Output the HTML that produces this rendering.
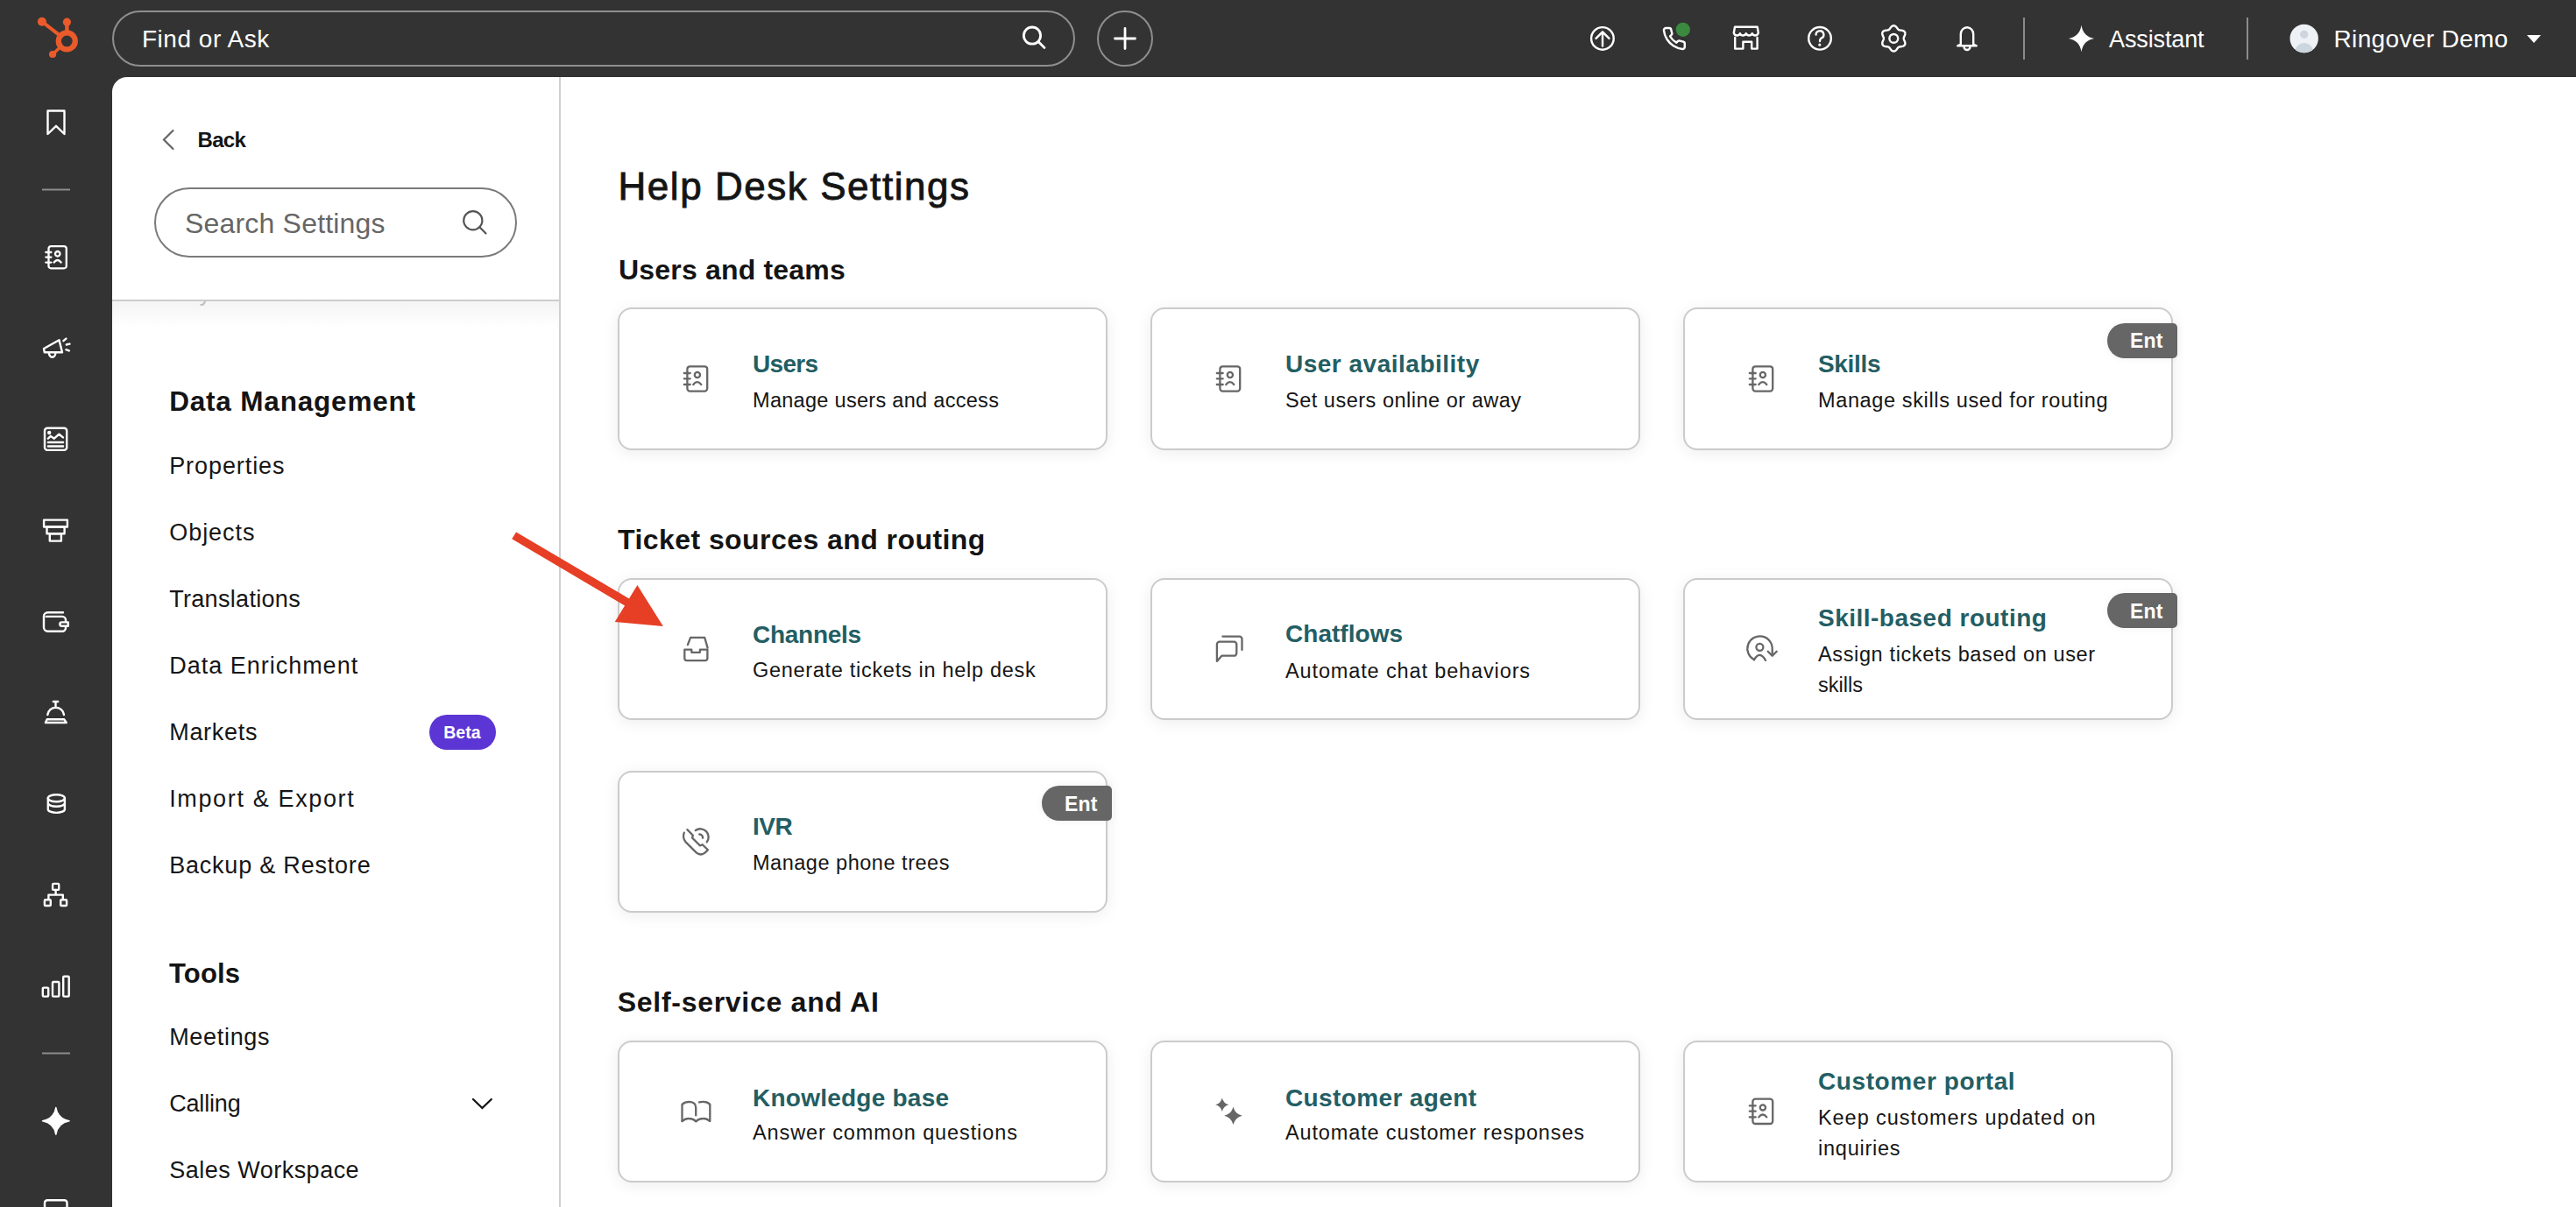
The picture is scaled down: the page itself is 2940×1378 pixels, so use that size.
<!DOCTYPE html>
<html><head><meta charset="utf-8"><title>Help Desk Settings</title>
<style>
html,body{margin:0;padding:0}
body{width:2940px;height:1378px;overflow:hidden;position:relative;background:#333333;font-family:"Liberation Sans",sans-serif}
.t{position:absolute;white-space:nowrap;line-height:1}
.panel{position:absolute;left:128px;top:88px;width:2812px;height:1290px;background:#ffffff;border-top-left-radius:17px;overflow:hidden}
.side{position:absolute;left:510px;top:0;width:2px;height:1290px;background:#cfcfcf}
.hline{position:absolute;left:0;top:254px;width:510px;height:2px;background:#cccccc}
.fade{position:absolute;left:0;top:256px;width:510px;height:30px;background:linear-gradient(rgba(0,0,0,0.045),rgba(0,0,0,0))}
.topsearch{position:absolute;left:128px;top:12px;width:1099px;height:64px;box-sizing:border-box;border:2px solid #8f8f8f;border-radius:32px}
.plus{position:absolute;left:1252px;top:12px;width:64px;height:64px;box-sizing:border-box;border:2px solid #8f8f8f;border-radius:50%}
.ssearch{position:absolute;left:176px;top:214px;width:414px;height:80px;box-sizing:border-box;border:2px solid #7a7a7a;border-radius:40px}
.beta{position:absolute;left:490px;top:816px;width:76px;height:40px;border-radius:20px;background:#5c35d5}
.card{position:absolute;width:559px;height:162.8px;box-sizing:border-box;border:2px solid #cbcbcb;border-radius:16px;background:#fff;box-shadow:0 3px 18px rgba(0,0,0,0.075)}
.ent{position:absolute;width:80px;height:40px;border-radius:20px 5px 5px 20px;background:#666666;box-shadow:0 0 10px rgba(0,0,0,0.06)}
svg.ov{position:absolute;left:0;top:0}
</style></head><body>
<div class="topsearch"></div>
<div class="plus"></div>
<div class="panel"><div class="side"></div><div class="hline"></div><div style="position:absolute;left:0;top:256px;width:510px;height:20px;overflow:hidden"><div class="t" style="left:65.2px;top:-23px;font-size:27px;color:#c8c8c8;letter-spacing:0.6px">Payments Account</div></div><div class="fade"></div></div>
<div class="ssearch"></div>
<div class="beta"></div>
<div class="card" style="left:704.5px;top:351.3px"></div>
<div class="card" style="left:1312.5px;top:351.3px"></div>
<div class="card" style="left:1920.5px;top:351.3px"></div>
<div class="ent" style="left:2405px;top:369.0px"></div>
<div class="card" style="left:704.5px;top:659.6px"></div>
<div class="card" style="left:1312.5px;top:659.6px"></div>
<div class="card" style="left:1920.5px;top:659.6px"></div>
<div class="ent" style="left:2405px;top:677.3000000000001px"></div>
<div class="card" style="left:704.5px;top:879.6px"></div>
<div class="ent" style="left:1189px;top:897.3000000000001px"></div>
<div class="card" style="left:704.5px;top:1187.7px"></div>
<div class="card" style="left:1312.5px;top:1187.7px"></div>
<div class="card" style="left:1920.5px;top:1187.7px"></div>
<svg class="ov" width="2940" height="1378" viewBox="0 0 2940 1378">
<g fill="#eb5a2b" stroke="#eb5a2b"><circle cx="76.3" cy="46.9" r="9.5" fill="none" stroke-width="6.3"/><path d="M76.4 25.2 V36" stroke-width="4.4" fill="none"/><path d="M47.9 24.7 L67.5 39.8" stroke-width="4" fill="none"/><path d="M60.1 62 L67.5 55" stroke-width="3.6" fill="none"/><circle cx="76.4" cy="25.2" r="4.6" stroke="none"/><circle cx="47.9" cy="24.7" r="5" stroke="none"/><circle cx="60.1" cy="62" r="4.1" stroke="none"/></g>
<g stroke="#fff" fill="none" stroke-width="2.4" stroke-linecap="round" stroke-linejoin="round">
<path d="M54.5 126.5 H73.5 V153 L64 143.8 L54.5 153 Z"/>
<g transform="translate(64.4 293.6) scale(0.89)" stroke-width="2.6"><rect x="-10" y="-14" width="22.8" height="28.3" rx="3"/><path d="M-13.6 -6.3 H-6.7 M-13.6 0 H-6.7 M-13.6 6.7 H-6.7"/><circle cx="1.5" cy="-4.3" r="3.1"/><path d="M-3.1 6.7 Q1.4 0.9 5.9 6.7"/></g>
<path d="M50 398 L67.5 388.2 L71 402.3 L50.8 402.3 Z"/><path d="M55.8 402.5 A3.8 5.2 0 0 0 63.4 402.5"/><path d="M72.4 389.2 L75.4 386.6 M75.8 393.5 L79.5 392.7 M75.4 399.2 L78.8 400.4"/>
<rect x="51" y="488.7" width="25.2" height="25.2" rx="3"/><circle cx="56.2" cy="494" r="1" fill="#fff"/><path d="M54.9 500.7 L57.9 497.9 L61.8 500.7 L67.4 495.7 L71.9 499.4 M54.9 505 H72.1 M54.9 509.5 H72.1"/>
<rect x="50.1" y="593.6" width="26.8" height="7.9"/><rect x="53.5" y="601.5" width="20.1" height="7.8"/><rect x="56.8" y="609.3" width="13.1" height="8.3"/>
<path d="M72 699.2 H54.5 A4.5 4.5 0 0 0 50 703.7 V716.2 A4.5 4.5 0 0 0 54.5 720.7 H71 A4 4 0 0 0 75 716.7 V715.2"/><path d="M52.7 703.9 H71 A4 4 0 0 1 75 707.9 V709.6"/><path d="M77.7 710.4 H70.5 A2.2 2.2 0 0 0 70.5 714.8 H77.7 Z"/>
<path d="M60.8 801 H66.2 M63.5 801.5 V806"/><path d="M54.3 816 A9.4 9.2 0 0 1 73 816"/><path d="M53.7 821.3 H73.3 L75.7 825 H51.9 Z"/>
<ellipse cx="64.35" cy="911.25" rx="9.55" ry="4"/><path d="M54.8 911.25 V923.9 A9.55 4 0 0 0 73.9 923.9 V911.25 M54.8 916.8 A9.55 4 0 0 0 73.9 916.8"/>
<rect x="60.1" y="1008.9" width="7.1" height="7" rx="1"/><path d="M63.6 1016 V1021.6 M55.4 1026.3 V1021.6 H71.8 V1026.3"/><rect x="50.9" y="1027.3" width="6.9" height="6.7" rx="1"/><rect x="69.2" y="1027.3" width="6.9" height="6.7" rx="1"/>
<rect x="48.8" y="1127.6" width="6.4" height="10" rx="1"/><rect x="60" y="1121" width="7.4" height="16.6" rx="1"/><rect x="72.2" y="1114.7" width="6.5" height="22.9" rx="1"/>
<rect x="51" y="1370.2" width="25.5" height="22" rx="3"/>
</g>
<rect x="48" y="215.5" width="32" height="2" fill="#8c8c8c"/>
<rect x="48" y="1201.5" width="32" height="2" fill="#8c8c8c"/>
<path d="M63.80 1264.60 Q66.08 1277.52 79.00 1279.80 Q66.08 1282.08 63.80 1295.00 Q61.52 1282.08 48.60 1279.80 Q61.52 1277.52 63.80 1264.60 Z" fill="#fff" stroke="#fff" stroke-width="1.6" stroke-linejoin="round"/>
<g stroke="#fff" fill="none" stroke-width="2.4" stroke-linecap="round" stroke-linejoin="round" stroke-width="2.5">
<circle cx="1178" cy="40.6" r="9.6" stroke-width="2.8"/><path d="M1185 47.6 L1192 54.6" stroke-width="2.8"/>
<path d="M1284 32.5 V55.5 M1272.5 44 H1295.5" stroke-width="2.8"/>
<circle cx="1828.9" cy="43.9" r="12.8"/><path d="M1829 52.6 V36.6 M1821.5 43.9 L1829 36.4 L1836.5 43.9"/>
<g transform="translate(1896.4 29.6) scale(1.2)" stroke-width="2.05"><path d="M22 16.92v3a2 2 0 0 1-2.18 2 19.79 19.79 0 0 1-8.63-3.070 19.5 19.5 0 0 1-6-6 19.79 19.790 0 0 1-3.07-8.67A2 2 0 0 1 4.11 2h3a2 2 0 0 1 2 1.72 12.84 12.84 0 0 0 .7 2.81 2 2 0 0 1-.45 2.11L8.09 9.91a16 16 0 0 0 6 6l1.27-1.27a2 2 0 0 1 2.11-.45 12.84 12.84 0 0 0 2.81.7A2 2 0 0 1 22 16.92z"/></g>
<path d="M1980 30.8 H2005.7 L2006.8 37.5 Q2006 40.5 2003.2 40.5 Q2000.5 40.5 1999.8 38.2 Q1999 40.5 1996.3 40.5 Q1993.5 40.5 1992.8 38.2 Q1992 40.5 1989.3 40.5 Q1986.6 40.5 1986 38.2 Q1985.2 40.5 1982.4 40.5 Q1979.6 40.5 1978.8 37.5 Z"/><path d="M1980.2 43 V55.6 H1989.4 V47.8 H1999.2 V55.6 H2005.6 V43"/>
<circle cx="2077" cy="43.8" r="12.8"/><path d="M2072.6 39.6 A4.4 4.3 0 1 1 2078.6 43.6 Q2077 44.5 2077 47"/>
<circle cx="2076.8" cy="51.2" r="0.6" fill="#fff" stroke-width="2"/>
<path d="M2172.70 43.90 L2172.76 44.50 L2172.94 45.12 L2173.21 45.79 L2173.53 46.50 L2173.86 47.26 L2174.13 48.07 L2174.31 48.90 L2174.36 49.71 L2174.24 50.49 L2173.94 51.20 L2173.48 51.81 L2172.86 52.30 L2172.13 52.67 L2171.33 52.93 L2170.49 53.09 L2169.67 53.19 L2168.89 53.27 L2168.18 53.37 L2167.55 53.53 L2167.00 53.77 L2166.51 54.13 L2166.06 54.59 L2165.62 55.16 L2165.16 55.79 L2164.66 56.46 L2164.11 57.10 L2163.48 57.67 L2162.79 58.12 L2162.06 58.40 L2161.30 58.50 L2160.54 58.40 L2159.81 58.12 L2159.12 57.67 L2158.49 57.10 L2157.94 56.46 L2157.44 55.79 L2156.98 55.16 L2156.54 54.59 L2156.09 54.13 L2155.60 53.77 L2155.05 53.53 L2154.42 53.37 L2153.71 53.27 L2152.93 53.19 L2152.11 53.09 L2151.27 52.93 L2150.47 52.67 L2149.74 52.30 L2149.12 51.81 L2148.66 51.20 L2148.36 50.49 L2148.24 49.71 L2148.29 48.90 L2148.47 48.07 L2148.74 47.26 L2149.07 46.50 L2149.39 45.79 L2149.66 45.12 L2149.84 44.50 L2149.90 43.90 L2149.84 43.30 L2149.66 42.68 L2149.39 42.01 L2149.07 41.30 L2148.74 40.54 L2148.47 39.73 L2148.29 38.90 L2148.24 38.09 L2148.36 37.31 L2148.66 36.60 L2149.12 35.99 L2149.74 35.50 L2150.47 35.13 L2151.27 34.87 L2152.11 34.71 L2152.93 34.61 L2153.71 34.53 L2154.42 34.43 L2155.05 34.27 L2155.60 34.03 L2156.09 33.67 L2156.54 33.21 L2156.98 32.64 L2157.44 32.01 L2157.94 31.34 L2158.49 30.70 L2159.12 30.13 L2159.81 29.68 L2160.54 29.40 L2161.30 29.30 L2162.06 29.40 L2162.79 29.68 L2163.48 30.13 L2164.11 30.70 L2164.66 31.34 L2165.16 32.01 L2165.62 32.64 L2166.06 33.21 L2166.51 33.67 L2167.00 34.03 L2167.55 34.27 L2168.18 34.43 L2168.89 34.53 L2169.67 34.61 L2170.49 34.71 L2171.33 34.87 L2172.13 35.13 L2172.86 35.50 L2173.48 35.99 L2173.94 36.60 L2174.24 37.31 L2174.36 38.09 L2174.31 38.90 L2174.13 39.73 L2173.86 40.54 L2173.53 41.30 L2173.21 42.01 L2172.94 42.68 L2172.76 43.30 L2172.70 43.90 Z"/><circle cx="2161.3" cy="43.9" r="4.9"/>
<path d="M2237.8 50.5 V39 A7.2 7.8 0 0 1 2252.2 39 V50.5 L2255.8 52.3 H2234.2 Z"/><path d="M2241.6 53.8 A3.4 3.2 0 0 0 2248.4 53.8"/>
</g>
<circle cx="1920.8" cy="33.8" r="8.1" fill="#3b8a40"/>
<path d="M2375.50 28.80 Q2377.54 41.87 2390.10 44.00 Q2377.54 46.13 2375.50 59.20 Q2373.46 46.13 2360.90 44.00 Q2373.46 41.87 2375.50 28.80 Z" fill="#fff"/>
<path d="M2884 40 H2900 L2892 49 Z" fill="#fff"/>
<clipPath id="av"><circle cx="2629.7" cy="44" r="16.2"/></clipPath><circle cx="2629.7" cy="44" r="16.2" fill="#eef1f5"/><g clip-path="url(#av)" fill="#cdd5de"><circle cx="2629.7" cy="39.3" r="4.6"/><ellipse cx="2629.7" cy="58" rx="10" ry="9"/></g>
<rect x="2309" y="20" width="2" height="48" fill="#8c8c8c"/><rect x="2564" y="20" width="2" height="48" fill="#8c8c8c"/>
<g stroke="#555" fill="none" stroke-width="2.2" stroke-linecap="round"><circle cx="539.8" cy="251.8" r="10.6"/><path d="M547.3 259.3 L554.5 266.5"/></g>
<path d="M197.5 149 L187 159.5 L197.5 170" stroke="#666" stroke-width="2.2" fill="none" stroke-linecap="round"/>
<path d="M540 1255 L550.4 1265 L560.8 1255" stroke="#111" stroke-width="2.2" fill="none" stroke-linecap="round"/>
<g transform="translate(794.40 432.30)" stroke="#666" fill="none" stroke-width="2.3" stroke-linecap="round" stroke-linejoin="round"><rect x="-10" y="-14" width="22.8" height="28.3" rx="3"/><path d="M-13.6 -6.3 H-6.7 M-13.6 0 H-6.7 M-13.6 6.7 H-6.7"/><circle cx="1.5" cy="-4.3" r="3.1"/><path d="M-3.1 6.7 Q1.4 0.9 5.9 6.7"/></g>
<g transform="translate(1402.40 432.30)" stroke="#666" fill="none" stroke-width="2.3" stroke-linecap="round" stroke-linejoin="round"><rect x="-10" y="-14" width="22.8" height="28.3" rx="3"/><path d="M-13.6 -6.3 H-6.7 M-13.6 0 H-6.7 M-13.6 6.7 H-6.7"/><circle cx="1.5" cy="-4.3" r="3.1"/><path d="M-3.1 6.7 Q1.4 0.9 5.9 6.7"/></g>
<g transform="translate(2010.40 432.30)" stroke="#666" fill="none" stroke-width="2.3" stroke-linecap="round" stroke-linejoin="round"><rect x="-10" y="-14" width="22.8" height="28.3" rx="3"/><path d="M-13.6 -6.3 H-6.7 M-13.6 0 H-6.7 M-13.6 6.7 H-6.7"/><circle cx="1.5" cy="-4.3" r="3.1"/><path d="M-3.1 6.7 Q1.4 0.9 5.9 6.7"/></g>
<g transform="translate(794.40 740.60)" stroke="#666" fill="none" stroke-width="2.3" stroke-linecap="round" stroke-linejoin="round"><path d="M-9.5 -4.4 L-6.3 -12.8 H9.8 L13.2 -1"/><path d="M-13.1 1 H-5.1 V4.2 H4.5 V1 H13 V11 A2.5 2.5 0 0 1 10.5 13.5 H-10.6 A2.5 2.5 0 0 1 -13.1 11 Z"/></g>
<g transform="translate(1402.40 740.60)" stroke="#666" fill="none" stroke-width="2.3" stroke-linecap="round" stroke-linejoin="round"><g transform="translate(-24.9 -30.4)"><path d="M11.4 44.7 V25.4 A3 3 0 0 1 14.4 22.4 H30.8 A3 3 0 0 1 33.8 25.4 V35.5 A3 3 0 0 1 30.8 38.5 H16.8 Z"/><path d="M17.9 16.4 H37 A3 3 0 0 1 40 19.4 V31.8"/></g></g>
<g transform="translate(2010.40 740.60)" stroke="#666" fill="none" stroke-width="2.3" stroke-linecap="round" stroke-linejoin="round"><g transform="translate(-25.3 -30.9)"><path d="M16.8 43.4 A14.2 14.2 0 1 1 37.6 32 V38.3"/><path d="M32.6 34 L37.6 39 L42.6 34"/><circle cx="23.3" cy="29.1" r="4"/><path d="M16.8 43.6 Q23.4 32.5 29.9 44.2"/></g></g>
<g transform="translate(794.40 960.60)" stroke="#666" fill="none" stroke-width="2.3" stroke-linecap="round" stroke-linejoin="round"><g transform="translate(-25 -30.5)"><path d="M11.4 20.6 Q9.3 26.5 13 31 L25.3 43.3 Q29.8 47.4 34.8 43.7 L38.5 40.2 L32.3 34.1 L29.5 35.3 L20.6 26.4 L21.5 23.6 L15 17"/><path d="M24.4 17.9 A9.4 9.4 0 0 1 37.3 31.3"/><path d="M28.8 22.4 A3.6 3.6 0 0 1 32.6 26.6"/></g></g>
<g transform="translate(794.40 1268.70)" stroke="#666" fill="none" stroke-width="2.3" stroke-linecap="round" stroke-linejoin="round"><g transform="translate(-24.8 -28.9)"><path d="M8.9 40.3 V21 Q12 18.1 17.3 18.1 Q24.6 18.5 24.6 25 V33.6"/><path d="M28.4 18.6 Q30.5 18 33.3 18.1 Q37.8 18.2 40.7 21 V40.3 Q37 37 33.3 37.2 Q27.8 37.2 24.7 40.6 Q21.6 37.2 16.3 37.2 Q12.6 37 8.9 40.3"/></g></g>
<g transform="translate(1377.90 1240.30)" fill="#666" stroke="none"><path d="M16.90 13.20 Q18.42 19.36 24.50 20.90 Q18.42 22.44 16.90 28.60 Q15.38 22.44 9.30 20.90 Q15.38 19.36 16.90 13.20 Z"/><path d="M29.60 23.20 Q31.64 31.44 39.80 33.50 Q31.64 35.56 29.60 43.80 Q27.56 35.56 19.40 33.50 Q27.56 31.44 29.60 23.20 Z"/></g>
<g transform="translate(2010.40 1268.70)" stroke="#666" fill="none" stroke-width="2.3" stroke-linecap="round" stroke-linejoin="round"><rect x="-10" y="-14" width="22.8" height="28.3" rx="3"/><path d="M-13.6 -6.3 H-6.7 M-13.6 0 H-6.7 M-13.6 6.7 H-6.7"/><circle cx="1.5" cy="-4.3" r="3.1"/><path d="M-3.1 6.7 Q1.4 0.9 5.9 6.7"/></g>
<g fill="#e63f26"><path d="M589.1 607.4 L584.2 615.3 L714 692 L719 684 Z"/><path d="M727.4 668 L701.7 710.1 L756.8 715 Z"/></g>
</svg>
<div class="t" style="left:162.0px;top:31.3px;font-size:28px;font-weight:400;color:#ffffff;letter-spacing:0.51px;">Find or Ask</div>
<div class="t" style="left:2407.0px;top:31.6px;font-size:27px;font-weight:400;color:#ffffff;letter-spacing:-0.12px;">Assistant</div>
<div class="t" style="left:2663.5px;top:31.0px;font-size:28px;font-weight:400;color:#ffffff;letter-spacing:0.35px;">Ringover Demo</div>
<div class="t" style="left:225.5px;top:147.7px;font-size:24px;font-weight:700;color:#141414;letter-spacing:-0.69px;">Back</div>
<div class="t" style="left:211.0px;top:238.9px;font-size:32px;font-weight:400;color:#666666;letter-spacing:0.19px;">Search Settings</div>
<div class="t" style="left:193.2px;top:443.3px;font-size:31.5px;font-weight:700;color:#141414;letter-spacing:0.81px;">Data Management</div>
<div class="t" style="left:193.2px;top:518.9px;font-size:27px;font-weight:400;color:#161616;letter-spacing:0.92px;">Properties</div>
<div class="t" style="left:193.2px;top:594.9px;font-size:27px;font-weight:400;color:#161616;letter-spacing:0.96px;">Objects</div>
<div class="t" style="left:193.2px;top:670.9px;font-size:27px;font-weight:400;color:#161616;letter-spacing:0.31px;">Translations</div>
<div class="t" style="left:193.2px;top:746.9px;font-size:27px;font-weight:400;color:#161616;letter-spacing:0.99px;">Data Enrichment</div>
<div class="t" style="left:193.2px;top:822.9px;font-size:27px;font-weight:400;color:#161616;letter-spacing:0.71px;">Markets</div>
<div class="t" style="left:193.2px;top:898.9px;font-size:27px;font-weight:400;color:#161616;letter-spacing:1.64px;">Import &amp; Export</div>
<div class="t" style="left:193.2px;top:974.9px;font-size:27px;font-weight:400;color:#161616;letter-spacing:0.79px;">Backup &amp; Restore</div>
<div class="t" style="left:193.0px;top:1095.8px;font-size:31px;font-weight:700;color:#141414;letter-spacing:0.16px;">Tools</div>
<div class="t" style="left:193.2px;top:1170.7px;font-size:27px;font-weight:400;color:#161616;letter-spacing:0.69px;">Meetings</div>
<div class="t" style="left:193.2px;top:1246.7px;font-size:27px;font-weight:400;color:#161616;letter-spacing:-0.17px;">Calling</div>
<div class="t" style="left:193.2px;top:1322.7px;font-size:27px;font-weight:400;color:#161616;letter-spacing:0.49px;">Sales Workspace</div>
<div class="t" style="left:506.2px;top:827.1px;font-size:19.5px;font-weight:700;color:#ffffff;letter-spacing:0.07px;">Beta</div>
<div class="t" style="left:705.5px;top:191.0px;font-size:44px;font-weight:400;color:#141414;letter-spacing:1.55px;-webkit-text-stroke:0.9px #1a1a1a">Help Desk Settings</div>
<div class="t" style="left:706.0px;top:292.1px;font-size:32px;font-weight:700;color:#141414;letter-spacing:0.19px;">Users and teams</div>
<div class="t" style="left:705.0px;top:600.3px;font-size:32px;font-weight:700;color:#141414;letter-spacing:0.44px;">Ticket sources and routing</div>
<div class="t" style="left:704.7px;top:1127.9px;font-size:32px;font-weight:700;color:#141414;letter-spacing:0.72px;">Self-service and AI</div>
<div class="t" style="left:859.0px;top:402.1px;font-size:28px;font-weight:700;color:#235e63;letter-spacing:-0.69px;">Users</div>
<div class="t" style="left:859.0px;top:446.1px;font-size:23.5px;font-weight:400;color:#161616;letter-spacing:0.30px;">Manage users and access</div>
<div class="t" style="left:1467.0px;top:401.8px;font-size:28px;font-weight:700;color:#235e63;letter-spacing:0.50px;">User availability</div>
<div class="t" style="left:1467.0px;top:445.8px;font-size:23.5px;font-weight:400;color:#161616;letter-spacing:0.51px;">Set users online or away</div>
<div class="t" style="left:2075.0px;top:402.1px;font-size:28px;font-weight:700;color:#235e63;letter-spacing:-0.33px;">Skills</div>
<div class="t" style="left:2075.0px;top:446.1px;font-size:23.5px;font-weight:400;color:#161616;letter-spacing:0.63px;">Manage skills used for routing</div>
<div class="t" style="left:2431.0px;top:378.3px;font-size:23px;font-weight:700;color:#ffffff;letter-spacing:0.22px;">Ent</div>
<div class="t" style="left:859.0px;top:710.8px;font-size:28px;font-weight:700;color:#235e63;letter-spacing:-0.28px;">Channels</div>
<div class="t" style="left:859.0px;top:754.0px;font-size:23.5px;font-weight:400;color:#161616;letter-spacing:0.70px;">Generate tickets in help desk</div>
<div class="t" style="left:1467.0px;top:710.1px;font-size:28px;font-weight:700;color:#235e63;letter-spacing:0.03px;">Chatflows</div>
<div class="t" style="left:1467.0px;top:754.5px;font-size:23.5px;font-weight:400;color:#161616;letter-spacing:0.87px;">Automate chat behaviors</div>
<div class="t" style="left:2075.0px;top:692.3px;font-size:28px;font-weight:700;color:#235e63;letter-spacing:0.49px;">Skill-based routing</div>
<div class="t" style="left:2075.0px;top:736.3px;font-size:23.5px;font-weight:400;color:#161616;letter-spacing:0.63px;">Assign tickets based on user</div>
<div class="t" style="left:2075.0px;top:771.2px;font-size:23.5px;font-weight:400;color:#161616;letter-spacing:0.00px;">skills</div>
<div class="t" style="left:2431.0px;top:686.6px;font-size:23px;font-weight:700;color:#ffffff;letter-spacing:0.22px;">Ent</div>
<div class="t" style="left:859.0px;top:930.1px;font-size:28px;font-weight:700;color:#235e63;letter-spacing:-0.49px;">IVR</div>
<div class="t" style="left:859.0px;top:974.1px;font-size:23.5px;font-weight:400;color:#161616;letter-spacing:0.52px;">Manage phone trees</div>
<div class="t" style="left:1215.0px;top:906.6px;font-size:23px;font-weight:700;color:#ffffff;letter-spacing:0.22px;">Ent</div>
<div class="t" style="left:859.0px;top:1240.4px;font-size:28px;font-weight:700;color:#235e63;letter-spacing:0.24px;">Knowledge base</div>
<div class="t" style="left:859.0px;top:1282.3px;font-size:23.5px;font-weight:400;color:#161616;letter-spacing:0.90px;">Answer common questions</div>
<div class="t" style="left:1467.0px;top:1240.4px;font-size:28px;font-weight:700;color:#235e63;letter-spacing:0.37px;">Customer agent</div>
<div class="t" style="left:1467.0px;top:1282.3px;font-size:23.5px;font-weight:400;color:#161616;letter-spacing:0.86px;">Automate customer responses</div>
<div class="t" style="left:2075.0px;top:1221.3px;font-size:28px;font-weight:700;color:#235e63;letter-spacing:0.60px;">Customer portal</div>
<div class="t" style="left:2075.0px;top:1264.6px;font-size:23.5px;font-weight:400;color:#161616;letter-spacing:0.94px;">Keep customers updated on</div>
<div class="t" style="left:2075.0px;top:1299.9px;font-size:23.5px;font-weight:400;color:#161616;letter-spacing:0.76px;">inquiries</div>
</body></html>
